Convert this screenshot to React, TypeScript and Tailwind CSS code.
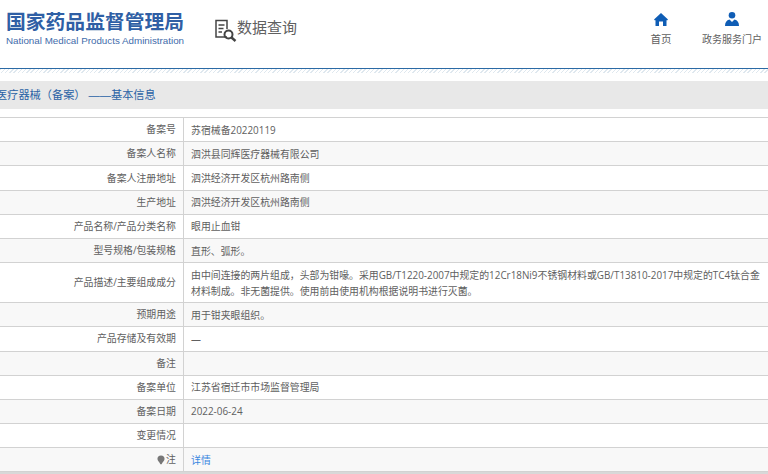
import React from 'react';

const cjk = { fontFamily: '"Open Sans", "Noto Sans CJK SC", sans-serif' };
const titleFont = { fontFamily: '"Liberation Sans", "Noto Sans CJK SC", sans-serif' };

const rows: { label: React.ReactNode; value: React.ReactNode; tall?: boolean }[] = [
  { label: '备案号', value: '苏宿械备20220119' },
  { label: '备案人名称', value: '泗洪县同辉医疗器械有限公司' },
  { label: '备案人注册地址', value: '泗洪经济开发区杭州路南侧' },
  { label: '生产地址', value: '泗洪经济开发区杭州路南侧' },
  { label: '产品名称/产品分类名称', value: '眼用止血钳' },
  { label: '型号规格/包装规格', value: '直形、弧形。' },
  {
    label: '产品描述/主要组成成分',
    value:
      '由中间连接的两片组成，头部为钳喙。采用GB/T1220-2007中规定的12Cr18Ni9不锈钢材料或GB/T13810-2017中规定的TC4钛合金材料制成。非无菌提供。使用前由使用机构根据说明书进行灭菌。',
    tall: true,
  },
  { label: '预期用途', value: '用于钳夹眼组织。' },
  { label: '产品存储及有效期', value: '—' },
  { label: '备注', value: '' },
  { label: '备案单位', value: '江苏省宿迁市市场监督管理局' },
  { label: '备案日期', value: '2022-06-24' },
  { label: '变更情况', value: '' },
  {
    label: (
      <span className="inline-flex items-center">
        <svg width="8" height="10" viewBox="0 0 9 11" className="mr-px">
          <path d="M4.5 0.5a4 4 0 0 1 4 4c0 2.2-2.4 3.6-3.3 5.8h-1.4C2.9 8.100.5 6.700.5 4.500a4 4 0 0 1 4-4z" fill="#777" />
        </svg>
        注
      </span>
    ),
    value: <span className="text-[#3a86e0]">详情</span>,
  },
];

export default function App() {
  return (
    <div className="w-[768px] h-[474px] overflow-hidden bg-white text-[#606060]" style={cjk}>
      {/* header */}
      <div className="h-[68px] flex">
        <div className="w-[205px] pl-[6px] pt-[10px]" style={titleFont}>
          <div className="text-[19.800px] leading-[24px] font-bold text-[#2f5fa5] whitespace-nowrap">国家药品监督管理局</div>
          <div className="text-[9.800px] leading-[12px] mt-[1px] text-[#3f6cab] whitespace-nowrap">National Medical Products Administration</div>
        </div>
        <div className="flex items-start pt-[17px] pl-[9px]">
          <svg width="24" height="24" viewBox="0 0 24 24" fill="none" stroke="#444" className="mt-[2px]">
            <path d="M13 18H2V1.500h11V10" strokeWidth="1.500" />
            <path d="M4.500 6h6M4.500 9.500h5M4.500 13h3.500" strokeWidth="1.300" />
            <circle cx="14.500" cy="15.500" r="4" strokeWidth="2" />
            <path d="M17.500 18.500l4 3.500" strokeWidth="2.400" />
          </svg>
          <span className="text-[15px] leading-[20px] text-[#606060] -ml-[1px]">数据查询</span>
        </div>
        <div className="ml-auto flex">
          <div className="flex flex-col items-center w-[44px] pt-[13px] mr-[19px]">
            <svg width="14" height="13" viewBox="0 0 14 13">
              <path d="M7 0L0 6.500l1 1 .5-.4V13h3.500V8.500h4V13h3.500V7.100l.5.400 1-1z" fill="#0f5db5" />
            </svg>
            <span className="text-[10.500px] leading-[14px] mt-[6px] text-[#606060]">首页</span>
          </div>
          <div className="flex flex-col items-center w-[60px] pt-[12px] mr-[6px]">
            <svg width="14" height="14" viewBox="0 0 14 14">
              <circle cx="7" cy="3.300" r="3.300" fill="#0f5db5" />
              <path d="M0 14c0-3.500 1.500-6 4.500-6.500L7 10l2.500-2.500C12.500 8 14 10.500 14 14z" fill="#0f5db5" />
            </svg>
            <span className="text-[10px] leading-[14px] mt-[6px] whitespace-nowrap text-[#606060]">政务服务门户</span>
          </div>
        </div>
      </div>
      <div className="h-[1px] bg-[#2b6aa5]" />
      <div className="h-[4px] bg-[repeating-linear-gradient(135deg,#dfe8ef_0,#dfe8ef_1px,#ffffff_1px,#ffffff_3px)]" />

      {/* section title */}
      <div className="mt-[8px] h-[28px] pt-[1px] bg-[#e8e8e8] overflow-hidden flex items-center">
        <div className="-ml-[4px] text-[11.200px] text-[#2a62a5] whitespace-nowrap" style={titleFont}>
          医疗器械（备案） ——基本信息
        </div>
      </div>

      {/* detail table */}
      <div className="mt-[8px] border-t border-[#d2d2d2]">
        {rows.map((r, i) => (
          <div
            key={i}
            className={`flex border-b border-[#d2d2d2] ${r.tall ? 'h-[40px]' : 'h-[24.200px]'} ${i % 2 === 1 ? 'bg-[#f8f8f8]' : 'bg-white'}`}
          >
            <div className="w-[184px] shrink-0 border-r border-[#d2d2d2] pr-[7px] flex items-center justify-end text-[9.900px]">
              {r.label}
            </div>
            <div className="flex-1 pl-[7px] flex items-center text-[9.900px] leading-[16px]">
              <div>{r.value}</div>
            </div>
          </div>
        ))}
        <div className="h-[3px] bg-[#d8d8d8]" />
      </div>
    </div>
  );
}
